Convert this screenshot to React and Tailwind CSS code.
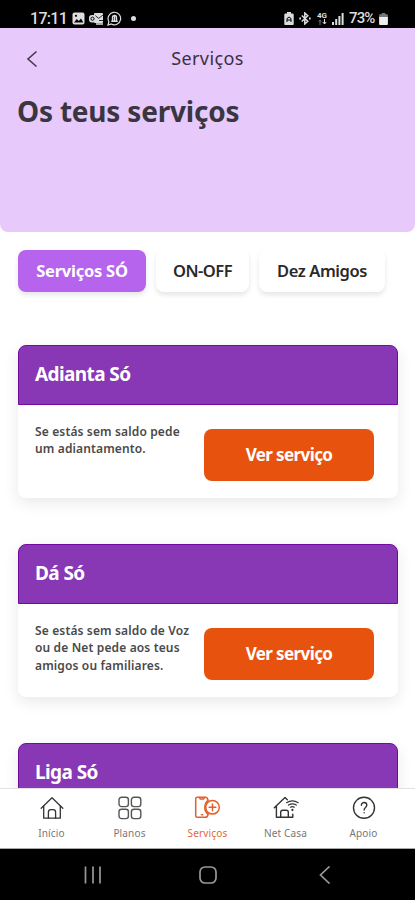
import React, { useState } from 'react'
import clsx from 'clsx'

const tabs = [
  { label: 'Serviços SÓ', width: 'w-[128px]', text: 'text-[16.5px] tracking-[-0.25px]' },
  { label: 'ON-OFF', width: 'w-[93px]', text: 'text-[16.5px] tracking-[-0.5px]' },
  { label: 'Dez Amigos', width: 'w-[126px]', text: 'text-[16.5px] tracking-[-0.4px]' },
]

const services = [
  { title: 'Adianta Só', lines: ['Se estás sem saldo pede', 'um adiantamento.'] },
  { title: 'Dá Só', lines: ['Se estás sem saldo de Voz', 'ou de Net pede aos teus', 'amigos ou familiares.'] },
  { title: 'Liga Só', lines: [] },
]

const HomeIcon = () => (
  <svg className="w-6 h-6" viewBox="0 0 24 24" fill="none" stroke="#333" strokeWidth="1.3" strokeLinejoin="round" strokeLinecap="round">
    <path d="M1.2 12.2 12 1.8l10.8 10.4" />
    <path d="M3.7 10v12.2h4.7v-6a2.5 2.5 0 0 1 2.5-2.5h2.2a2.5 2.5 0 0 1 2.5 2.5v6h4.7V10" />
    <path d="M8.4 22.2h7.2" />
  </svg>
)

const PlansIcon = () => (
  <svg className="w-6 h-6" viewBox="0 0 24 24" fill="none" stroke="#555" strokeWidth="1.4">
    <rect x="1" y="1.2" width="9.4" height="9.4" rx="2.6" />
    <rect x="13.4" y="1.2" width="9.4" height="9.4" rx="2.6" />
    <rect x="1" y="13.2" width="9.4" height="9.4" rx="2.6" />
    <rect x="13.4" y="13.2" width="9.4" height="9.4" rx="2.6" />
  </svg>
)

const ServicesIcon = () => (
  <svg className="w-[27px] h-6" viewBox="0 0 27 24" fill="none" stroke="#e2602a" strokeWidth="1.5" strokeLinejoin="round" strokeLinecap="round">
    <path d="M14 4.200C13.600 2.600 13 1.300 11.500 1.300H3.200A1.500 1.500 0 0 0 1.700 2.800v17a1.500 1.500 0 0 0 1.500 1.500h8.300c1.500 0 2.200-1.200 2.500-2.800" />
    <path d="M5.500 1.500l.7 1.500h3.600l.7-1.500M7.500 18.700h1.200" />
    <path d="M14 4.200c-4.300 3.700-4.300 10.600 0 14.300" />
    <circle cx="18.500" cy="11.300" r="6.800" />
    <path d="M18.500 7.900v6.800M15.100 11.300h6.800" />
  </svg>
)

const HomeNetIcon = () => (
  <svg className="w-[26px] h-6" viewBox="0 0 26 24" fill="none" stroke="#333" strokeWidth="1.4" strokeLinejoin="round" strokeLinecap="round">
    <path d="M1.300 11.700 12 1.500l2.300 2.200M3.400 9.900v11.400h4.300v-5a2 2 0 0 1 2-2h3.600a2 2 0 0 1 2 2v5h4.500v-3.200M7.700 21.300h7.600" />
    <path d="M13.600 6.700c3.500-2.200 8.100-2.200 11.600 0M15.500 9.100c2.300-1.500 5.500-1.500 7.800 0M17.500 11.200c1.200-.8 2.600-.8 3.800 0" strokeWidth="1.200" />
    <path d="M19.400 13.900v.2" strokeWidth="2.200" />
  </svg>
)

const HelpIcon = () => (
  <svg className="w-6 h-6" viewBox="0 0 24 24" fill="none" stroke="#333" strokeWidth="1.4" strokeLinecap="round">
    <circle cx="12" cy="11.800" r="10.500" />
    <path d="M9.400 9.200c0-3.600 5.400-3.500 5.400 0 0 2.200-2.700 2.300-2.700 4.800M12.100 16.600v.2" />
  </svg>
)

const navItems = [
  { label: 'Início', icon: HomeIcon },
  { label: 'Planos', icon: PlansIcon },
  { label: 'Serviços', icon: ServicesIcon },
  { label: 'Net Casa', icon: HomeNetIcon },
  { label: 'Apoio', icon: HelpIcon },
]

const StatusBar = () => (
  <div className="h-[28px] shrink-0 bg-black text-[#ddd] flex items-center justify-between pl-[30px] pr-[27px] pt-[9px] font-[Roboto] text-[16px] leading-none">
    <div className="flex items-center">
      <span className="w-[35px] font-medium tracking-[-0.7px]">17:11</span>
      <svg className="ml-[7px] w-[13px] h-[13px]" viewBox="0 0 13 13">
        <rect x=".5" y=".5" width="12" height="12" rx="2" fill="#ddd" />
        <path d="M2 10.500 4.800 7l2 2L9 6.500l2.300 4Z" fill="#000" />
        <circle cx="4" cy="3.800" r="1.100" fill="#000" />
      </svg>
      <svg className="ml-[4px] w-[15px] h-[13px]" viewBox="0 0 15 13">
        <rect x="5" y="1" width="9" height="10" rx="1" fill="#ddd" />
        <path d="m6 3.500 3.700 2.800L14 3M10 8.500h4" stroke="#000" strokeWidth=".8" fill="none" />
        <rect x="0" y="3" width="7" height="7.500" rx="3" fill="#ddd" />
        <circle cx="3.500" cy="6.700" r="1.600" stroke="#000" fill="none" />
        <path d="M7 12h7" stroke="#ddd" strokeWidth="1.500" />
      </svg>
      <svg className="ml-[3px] w-[15px] h-[15px]" viewBox="0 0 15 15" fill="none" stroke="#ddd" strokeWidth="1.200">
        <path d="M1 14l.9-3.300a6.300 6.300 0 1 1 2.300 2.300Z" />
        <path d="M5.500 10V6.500a2 2 0 0 1 4 0V10M4.300 10.200h6.400M7.500 4v5.500" strokeWidth="1.400" />
      </svg>
      <span className="ml-[9px] w-[5px] h-[5px] rounded-full bg-[#ddd]" />
    </div>
    <div className="flex items-center">
      <svg className="w-[10px] h-[13px]" viewBox="0 0 10 13">
        <path d="M3 0h4v1.500h1.500a1.200 1.200 0 0 1 1.200 1.200v9.300a1 1 0 0 1-1.200 1h-7a1 1 0 0 1-1.200-1V2.700a1.200 1.200 0 0 1 1.200-1.200H3Z" fill="#ddd" />
        <path d="M3 10V6.500L5 5l2 1.500V10M3 8h4" stroke="#000" fill="none" />
      </svg>
      <svg className="ml-[5px] w-[12px] h-[13px]" viewBox="0 0 12 13" fill="none" stroke="#ddd" strokeWidth="1.500">
        <path d="m2.800 3.500 6 5.800-3 2.700V1l3 2.700-6 5.800" />
        <path d="M.3 6.500H2M10 6.500h1.700" strokeWidth="2" />
      </svg>
      <span className="ml-[5px] w-[12px] flex flex-col items-center text-[8px] leading-[7px] font-bold">
        <span>4G</span>
        <svg className="w-[9px] h-[6px]" viewBox="0 0 9 6" fill="none" stroke="#ddd">
          <path d="M2 6V1M.7 2.500 2 1l1.300 1.500" stroke="#777" />
          <path d="M6.500 0v5M4.800 3l1.700 2 1.700-2" />
        </svg>
      </span>
      <svg className="ml-[4px] w-[12px] h-[12px]" viewBox="0 0 12 12" fill="#ddd">
        <rect x="0" y="9" width="2" height="3" />
        <rect x="3.200" y="6" width="2" height="6" />
        <rect x="6.400" y="3" width="2" height="9" />
        <rect x="9.600" y="0" width="2" height="12" />
      </svg>
      <span className="ml-[5px] w-[27px] text-[15px] font-medium tracking-[-0.9px]">73%</span>
      <svg className="ml-[3px] w-[9px] h-[12px]" viewBox="0 0 9 12">
        <path d="M2.700 0h3.600v1.300H8a.9.9 0 0 1 .9.900V5H.1V2.200a.9.9 0 0 1 .9-.9h1.700Z" fill="#777" />
        <path d="M.1 4h8.800v7a1 1 0 0 1-1 1H1.100a1 1 0 0 1-1-1Z" fill="#eee" />
      </svg>
    </div>
  </div>
)

const ServiceCard = ({ title, lines }) => (
  <div className="h-[153px] shrink-0 rounded-lg bg-white shadow-[0_5px_16px_rgba(0,0,0,0.09)]">
    <div className="h-[60px] rounded-t-lg bg-[#8837b5] border border-[#740aa3] px-4 pb-[2px] flex items-center">
      <h2 className="text-white font-bold text-[19px] tracking-[-0.6px]">{title}</h2>
    </div>
    {lines.length > 0 && (
      <div className="flex justify-between pl-[17px] pr-6 pt-[18px]">
        <p className="text-[12px] leading-[17.300px] font-semibold tracking-[0.14px] text-[#4a4a4a] whitespace-nowrap">
          {lines.map((line) => (
            <span key={line} className="block">{line}</span>
          ))}
        </p>
        <button className="mt-[6px] w-[170px] h-[52px] shrink-0 rounded-lg bg-[#e7530e] text-white font-bold text-[17px] tracking-[-0.6px]">
          Ver serviço
        </button>
      </div>
    )}
  </div>
)

const App = () => {
  const [activeTab, setActiveTab] = useState('Serviços SÓ')

  return (
    <div className="w-[415px] h-[900px] flex flex-col overflow-hidden bg-white font-['Noto_Sans',sans-serif]">
      <StatusBar />

      <header className="h-[204px] shrink-0 rounded-b-lg bg-[#e7c9fc]">
        <div className="h-[60px] grid grid-cols-[64px_1fr_64px] items-center">
          <svg className="ml-[26px] mt-[2px] w-3 h-[18px]" viewBox="0 0 12 18" fill="none" stroke="#443a4b" strokeWidth="1.600">
            <path d="M10.500 1.500 2 9l8.500 7.500" />
          </svg>
          <h3 className="text-center text-[18px] tracking-[0.4px] text-[#393040]">Serviços</h3>
        </div>
        <h1 className="pl-[17px] pt-[3px] text-[28px] leading-[40px] font-bold tracking-[-0.2px] text-[#393641]">Os teus serviços</h1>
      </header>

      {/* Tabs */}
      <div className="flex gap-[10px] pl-[18px] pt-[18px] shrink-0">
        {tabs.map((tab) => (
          <button
            key={tab.label}
            onClick={() => setActiveTab(tab.label)}
            className={clsx(
              'h-[42px] rounded-lg whitespace-nowrap shadow-[0_3px_5px_rgba(0,0,0,0.1)]',
              tab.width,
              tab.text,
              activeTab === tab.label ? 'bg-[#b663ed] text-white font-bold' : 'bg-white text-[#292929] font-semibold'
            )}
          >
            {tab.label}
          </button>
        ))}
      </div>

      {/* Service list */}
      <main className="flex-1 min-h-0 overflow-hidden mt-[33px] pt-5 pl-[18px] pr-[17px] flex flex-col gap-[46px]">
        {services.map((service) => (
          <ServiceCard key={service.title} title={service.title} lines={service.lines} />
        ))}
      </main>

      <nav className="h-[61px] shrink-0 bg-white border-t border-[#e4e0e6] border-b border-b-[#aaa] grid grid-cols-[78px_78px_78px_78px_78px] justify-center pt-[7px]">
        {navItems.map(({ label, icon: Icon }) => (
          <div key={label} className="flex flex-col items-center">
            <Icon />
            <span className={clsx('mt-[6px] text-[10px] leading-[14px] tracking-[0.15px]', label === 'Serviços' ? 'text-[#df6737]' : 'text-[#777]')}>
              {label}
            </span>
          </div>
        ))}
      </nav>

      {/* System navigation */}
      <div className="h-[51px] shrink-0 bg-black flex items-center">
        <svg className="ml-[84px] w-[18px] h-[18px]" viewBox="0 0 18 18" fill="none" stroke="#999" strokeWidth="1.700">
          <path d="M1.500 .5v17M9 .5v17M16 .5v17" />
        </svg>
        <svg className="ml-[97px] w-[18px] h-[18px]" viewBox="0 0 18 18" fill="none" stroke="#999" strokeWidth="1.700">
          <rect x="1" y="1" width="16" height="16" rx="5" />
        </svg>
        <svg className="ml-[102px] w-3 h-[18px]" viewBox="0 0 12 18" fill="none" stroke="#999" strokeWidth="1.700">
          <path d="M10.500 .5 1.500 9l9 8.500" />
        </svg>
      </div>
    </div>
  )
}

export default App
